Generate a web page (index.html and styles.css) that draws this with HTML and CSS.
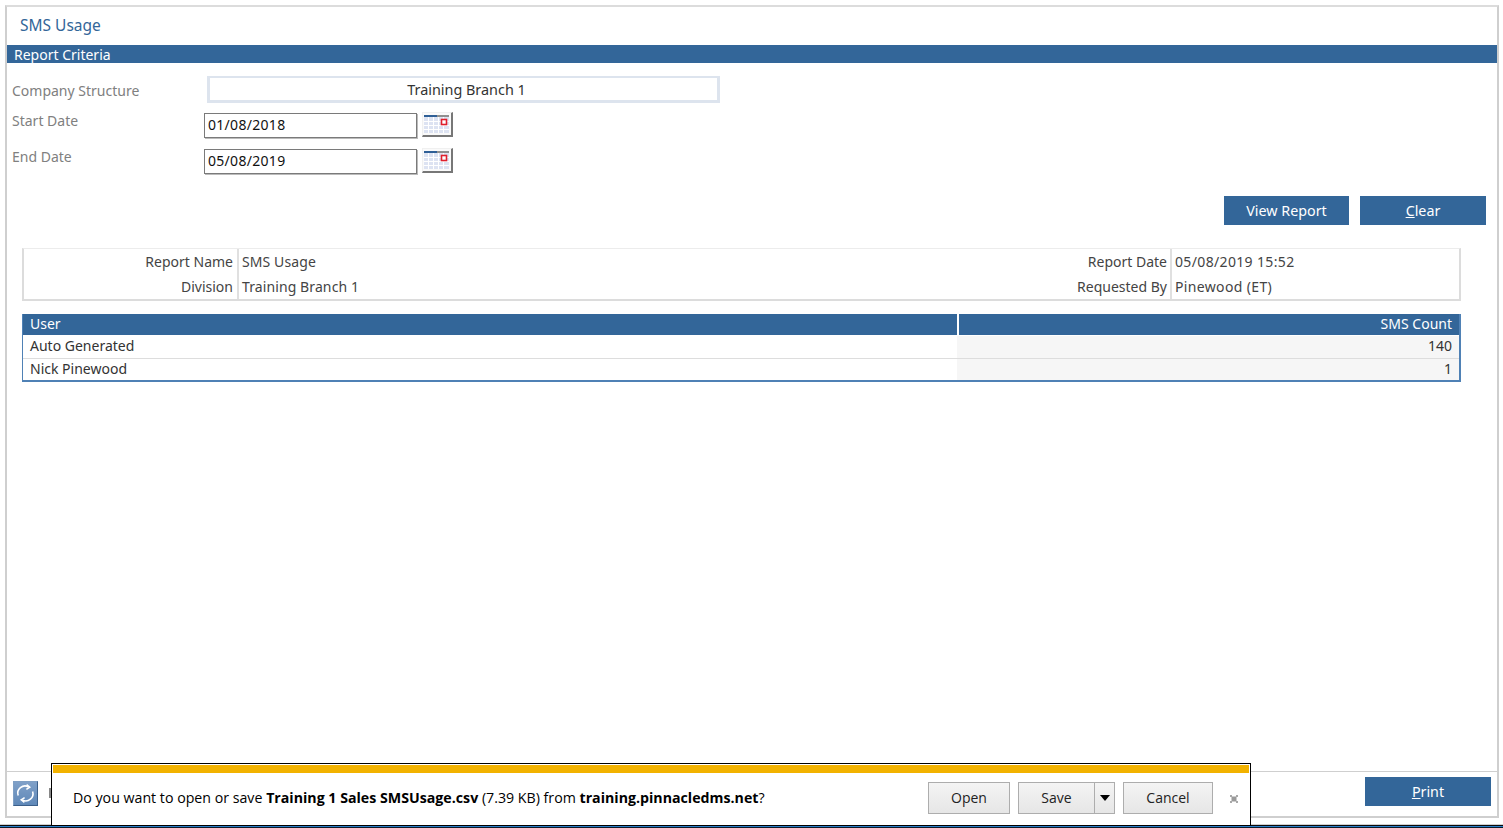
FILE: index.html
```html
<!DOCTYPE html>
<html lang="en">
<head>
<meta charset="utf-8">
<title>SMS Usage</title>
<link rel="stylesheet" href="styles.css">
</head>
<body>
<main class="frame">
  <h1 class="title">SMS Usage</h1>
  <h2 class="bar">Report Criteria</h2>
  <section class="criteria">
    <div class="row row-company">
      <span class="label">Company Structure</span>
      <div class="select">Training Branch 1</div>
    </div>
    <div class="row row-date">
      <span class="label">Start Date</span>
      <input class="date" type="text" value="01/08/2018">
      <button class="cal" type="button" aria-label="Pick start date">
        <svg width="25" height="20" viewBox="0 0 25 20"><rect x="0" y="1" width="13" height="2" fill="#2f5f96"/><rect x="13" y="1" width="12" height="2" fill="#8f8f8f"/><rect x="0" y="3" width="25" height="16" fill="#dde3f2"/><path d="M0 7.5h25M0 11.5h25M0 15.5h25M4.5 3v16M9.5 3v16M14.5 3v16M19.5 3v16" stroke="#fff" fill="none"/><rect x="17.5" y="5.5" width="5" height="5" fill="#fff" stroke="#e0202c" stroke-width="1.6"/></svg>
      </button>
    </div>
    <div class="row row-date">
      <span class="label">End Date</span>
      <input class="date" type="text" value="05/08/2019">
      <button class="cal" type="button" aria-label="Pick end date">
        <svg width="25" height="20" viewBox="0 0 25 20"><rect x="0" y="1" width="13" height="2" fill="#2f5f96"/><rect x="13" y="1" width="12" height="2" fill="#8f8f8f"/><rect x="0" y="3" width="25" height="16" fill="#dde3f2"/><path d="M0 7.5h25M0 11.5h25M0 15.5h25M4.5 3v16M9.5 3v16M14.5 3v16M19.5 3v16" stroke="#fff" fill="none"/><rect x="17.5" y="5.5" width="5" height="5" fill="#fff" stroke="#e0202c" stroke-width="1.6"/></svg>
      </button>
    </div>
  </section>
  <div class="actions">
    <button class="btn btn-view" type="button">View Report</button>
    <button class="btn btn-clear" type="button"><u>C</u>lear</button>
  </div>
  <section class="info">
    <div class="info-row">
      <span class="k k-first">Report Name</span><span class="v v-mid">SMS Usage</span>
      <span class="k k-second">Report Date</span><span class="v v-end">05/08/2019 15:52</span>
    </div>
    <div class="info-row">
      <span class="k k-first">Division</span><span class="v v-mid">Training Branch 1</span>
      <span class="k k-second">Requested By</span><span class="v v-end">Pinewood (ET)</span>
    </div>
  </section>
  <section class="data">
    <div class="data-row data-head"><span class="c-user">User</span><span class="c-count">SMS Count</span></div>
    <div class="data-row data-first"><span class="c-user">Auto Generated</span><span class="c-count">140</span></div>
    <div class="data-row data-last"><span class="c-user">Nick Pinewood</span><span class="c-count">1</span></div>
  </section>
  <div class="spacer"></div>
  <footer class="foot">
    <button class="refresh" type="button" aria-label="Refresh">
      <svg width="21" height="21" viewBox="0 0 21 21" fill="none" stroke="#fff" stroke-width="1.6"><path d="M3.2 12.6A7.2 7.2 0 0 1 13.6 4"/><path d="M17.6 8.4A7.2 7.2 0 0 1 7.4 17"/><path d="M11.6 1.6l3.2 2.6-3.4 2.2" stroke-width="1.5"/><path d="M9.4 19.4l-3.2-2.6 3.4-2.2" stroke-width="1.5"/></svg>
    </button>
    <span class="stub"></span>
    <button class="btn btn-print" type="button"><u>P</u>rint</button>
  </footer>
</main>
<div class="taskbar"></div>
<aside class="notify">
  <div class="notify-strip"></div>
  <div class="notify-body">
    <p class="msg">Do you want to open or save <b>Training 1 Sales SMSUsage.csv</b> (7.39 KB) from <b>training.pinnacledms.net</b>?</p>
    <button class="nbtn nbtn-open" type="button">Open</button>
    <div class="split">
      <button class="nbtn nbtn-save" type="button">Save</button>
      <button class="nbtn nbtn-arrow" type="button" aria-label="More save options"><span class="tri"></span></button>
    </div>
    <button class="nbtn nbtn-cancel" type="button">Cancel</button>
    <span class="close">
      <svg width="8" height="8" viewBox="0 0 8 8"><rect x="1.5" y="1.5" width="5" height="5" fill="#9a9a9a"/><path d="M0 0h2v2H0zM6 0h2v2H6zM0 6h2v2H0zM6 6h2v2H6z" fill="#a8a8a8"/></svg>
    </span>
  </div>
</aside>
</body>
</html>
```
FILE: styles.css
```css
* { box-sizing: border-box; }
html, body { margin: 0; padding: 0; height: 828px; overflow: hidden; background: #fff; }
body { font-family: "Noto Sans", Tahoma, sans-serif; font-size: 14px; color: #333; }
button { font-family: inherit; cursor: pointer; }

.frame {
  margin: 5px 0 0 5px;
  width: 1494px;
  height: 813px;
  border: 2px solid #cfcfcf;
  border-top-color: #dcdcdc;
  display: flex;
  flex-direction: column;
  background: #fff;
}
.title { margin: 0; height: 38px; padding: 7px 0 0 13px; font-size: 15.5px; line-height: 22px; font-weight: 400; color: #336699; }
.bar { margin: 0; height: 18px; padding-left: 7px; font-size: 14px; line-height: 19px; font-weight: 400; color: #fff; background: #336699; }

.criteria { padding: 13px 0 0 5px; }
.row { display: flex; align-items: flex-start; }
.label { color: #808080; font-size: 14px; }
.row-company { height: 37px; }
.row-company .label { width: 195px; padding-top: 5px; line-height: 20px; }
.select { width: 513px; height: 27px; border: 2px solid #dde4ee; border-width: 2px 3px 3px 3px; padding-left: 6px; text-align: center; font-size: 14.4px; line-height: 24px; color: #333; }
.row-date { height: 36px; }
.row-date .label { width: 192px; line-height: 16px; }
.date { width: 213px; height: 25px; border: 1px solid #7a7a7a; padding: 0 3px 2px; font: inherit; letter-spacing: 0.3px; color: #111; background: #fff; outline: none; box-shadow: 1px 1px 0 #bbb; }
.cal { width: 31px; height: 25px; margin: -1px 0 0 5px; padding: 1px 0 0 1px; border: solid; border-color: #f0f0f0 #777 #777 #f0f0f0; border-width: 1px 2px 2px 1px; background: #fafafa; display: flex; align-items: flex-start; justify-content: flex-start; }

.actions { display: flex; justify-content: flex-end; gap: 11px; padding-right: 11px; margin-top: 11px; }
.btn { height: 29px; padding: 0; border: 0; background: #336699; color: #fff; font-size: 14.3px; }
.btn-view { width: 125px; }
.btn-clear { width: 126px; }

.info { margin: 23px 0 0 15px; width: 1439px; height: 53px; border: 2px solid #dcdcdc; border-top-width: 1px; border-top-color: #ececec; }
.info-row { display: flex; height: 25px; line-height: 25px; }
.k { text-align: right; padding-right: 4px; color: #444; }
.k-first { width: 213px; }
.k-second { flex: 1; padding-right: 3px; }
.v { padding-left: 3px; border-left: 2px solid #e0e0e0; color: #444; }
.v-mid { width: 500px; letter-spacing: 0.1px; }
.v-end { width: 289px; letter-spacing: 0.35px; }

.data { margin: 13px 0 0 15px; width: 1439px; border: solid #4f81b5; border-width: 0 2px 2px 1px; }
.data-row { display: flex; height: 22px; line-height: 19px; color: #333; }
.data-row + .data-row { border-top: 1px solid #ddd; }
.data-head { height: 21px; background: #336699; color: #fff; line-height: 19px; }
.data-head + .data-first { border-top: 0; height: 22px; margin-top: 1px; line-height: 20px; }
.c-user { width: 934px; padding-left: 7px; }
.c-count { flex: 1; padding-right: 7px; text-align: right; background: #f6f6f6; }
.data-head .c-count { background: #336699; border-left: 2px solid #fff; }

.spacer { flex: 1; }
.foot { height: 45px; border-top: 1px solid #cfcfcf; display: flex; align-items: flex-start; padding: 5px 6px 0 6px; }
.refresh { width: 25px; height: 25px; margin-top: 4px; padding: 0; border: 1px solid; border-color: #7f9fc4 #3b5f8a #3b5f8a #7f9fc4; background: linear-gradient(#7fa0c8, #5f88b8); display: flex; align-items: center; justify-content: center; }
.stub { width: 4px; height: 10px; margin: 11px 0 0 11px; background: #888; }
.btn-print { margin-left: auto; width: 126px; }

.taskbar { height: 4px; margin-top: 6px; background: linear-gradient(#cfcfcf 25%, #0a0a0a 25%, #0a0a0a 50%, #2a7fc9 50%, #2a7fc9 75%, #0a1a2a 75%); }

.notify { position: absolute; left: 51px; top: 763px; width: 1200px; height: 63px; background: #fff; border: 1px solid #000; padding: 1px; display: flex; flex-direction: column; color: #000; font-family: "Open Sans", sans-serif; }
.notify-strip { height: 8px; flex: none; background: #f2b200; }
.notify-body { flex: 1; display: flex; align-items: center; padding: 0 0 2px 20px; }
.msg { margin: 0; flex: 1; font-size: 14.2px; }
.nbtn { height: 32px; padding: 0; border: 1px solid #adadad; background: linear-gradient(#f4f4f4, #e6e6e6); color: #222; font-size: 14px; }
.nbtn-open { width: 82px; }
.split { display: flex; margin-left: 8px; }
.nbtn-save { width: 76px; border-right: 0; }
.nbtn-arrow { width: 21px; display: flex; align-items: center; justify-content: center; }
.tri { width: 0; height: 0; border: 5px solid transparent; border-top: 6px solid #000; border-bottom: 0; }
.nbtn-cancel { width: 90px; margin-left: 8px; }
.close { width: 36px; display: flex; justify-content: center; padding: 2px 0 0 6px; }
```
